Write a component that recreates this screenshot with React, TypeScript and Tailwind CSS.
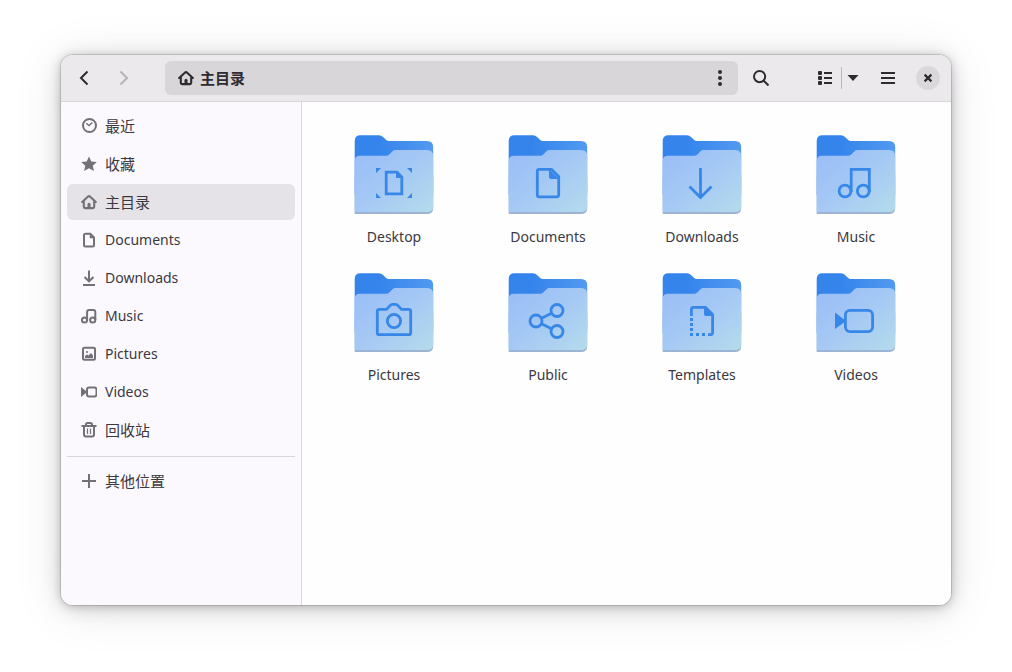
import React from 'react';
import clsx from 'clsx';

type IconName =
  | 'recent' | 'star' | 'home' | 'document' | 'download' | 'music' | 'picture' | 'video' | 'trash' | 'plus'
  | 'back' | 'forward' | 'kebab' | 'search' | 'list' | 'caret' | 'menu' | 'close';

type FolderName = 'desktop' | 'documents' | 'downloads' | 'music' | 'pictures' | 'public' | 'templates' | 'videos';

const iconShapes: Record<IconName, React.ReactNode> = {
  recent: (
    <>
      <circle cx="8.5" cy="7.5" r="6.5" />
      <path d="M5.3 5.2 8 7.6l3.4-3" strokeWidth="1.4" />
    </>
  ),
  star: (
    <path
      d="M8 0.6 10.3 5.5 15.8 6 11.7 9.7 13 15 8 12.2 3 15 4.3 9.7.2 6 5.7 5.5Z"
      fill="currentColor"
      stroke="none"
    />
  ),
  home: (
    <>
      <path
        d="M1.2 8 6.8 2.7Q8 1.600 9.200 2.700L14.800 8M2.800 7.500V12.800A1.300 1.300 0 0 0 4.100 14.100H11.900A1.300 1.300 0 0 0 13.200 12.800V7.500"
        strokeWidth="2.1"
        strokeLinecap="round"
      />
      <path d="M6.5 14V10.3a1.5 1.5 0 0 1 3 0V14Z" fill="currentColor" stroke="none" />
    </>
  ),
  document: (
    <>
      <path d="M4.800 1.800h4.500L13 5.500V13a1.500 1.500 0 0 1-1.500 1.500h-7A1.500 1.500 0 0 1 3 13V3.300A1.500 1.500 0 0 1 4.500 1.800Z" />
      <path d="M8.800 2v4.200h4.200Z" fill="currentColor" stroke="none" />
    </>
  ),
  download: <path d="M8 .5V11M3.5 7 8 11.3 12.5 7M2 15h12" />,
  music: (
    <>
      <circle cx="3.5" cy="12" r="2.6" />
      <circle cx="11.7" cy="12" r="2.6" />
      <path d="M6.1 12V4a2 2 0 0 1 2-2h4.200a2 2 0 0 1 2 2V12" />
    </>
  ),
  picture: (
    <>
      <rect x="2" y="1.800" width="12" height="12" rx="1.500" />
      <path d="M4 12V10l2-1.5 1.5 1L10 7l2 2.5V12Z" fill="currentColor" stroke="none" />
      <circle cx="6" cy="6" r="1" fill="currentColor" stroke="none" />
    </>
  ),
  video: (
    <>
      <rect x="6" y="3.500" width="9.500" height="9" rx="2.200" />
      <path d="M0 3 5 7v2L0 13Z" fill="currentColor" stroke="none" />
    </>
  ),
  trash: (
    <>
      <path d="M.5 4h15M3 4v8.5A2 2 0 0 0 5 14.5h6a2 2 0 0 0 2-2V4M5 4V2.500A1.500 1.500 0 0 1 6.500 1h3A1.500 1.500 0 0 1 11 2.500V4" />
      <path d="M6.500 6.500v5.500M9.500 6.500v5.500" strokeWidth="1.200" />
    </>
  ),
  plus: <path d="M8 1v14M1 8h14" />,
  back: <path d="M11.500 1.500 5 8 11.500 14.500" />,
  forward: <path d="M4.500 1.500 11 8 4.500 14.500" />,
  kebab: (
    <g fill="currentColor" stroke="none">
      <circle cx="8" cy="2" r="2" />
      <circle cx="8" cy="8" r="2" />
      <circle cx="8" cy="14" r="2" />
    </g>
  ),
  search: (
    <>
      <circle cx="6.600" cy="6.600" r="5.600" />
      <path d="m10.500 10.500 5 5" />
    </>
  ),
  list: (
    <g fill="currentColor" stroke="none">
      <rect x="1" y="1" width="4" height="4" rx="1" />
      <rect x="1" y="6" width="4" height="4" rx="1" />
      <rect x="1" y="11" width="4" height="4" rx="1" />
      <path d="M7 2h8v2H7zM7 7h8v2H7zM7 12h8v2H7z" />
    </g>
  ),
  caret: <path d="M2.500 5h11L8 11Z" fill="currentColor" stroke="none" />,
  menu: <path d="M1 3h14M1 8h14M1 13h14" />,
  close: <path d="m4.600 4.600 6.800 6.800M11.400 4.600l-6.800 6.800" strokeWidth="2.200" />,
};

const folderGlyphs: Record<FolderName, React.ReactNode> = {
  desktop: (
    <>
      <path d="M32.200 37.200H43L47.800 42V58.800H32.200Z" />
      <path
        d="M42 37v6h6ZM22 38V33h5ZM53 33h5v5ZM22 58v5h5ZM58 58v5h-5Z"
        fill="currentColor"
        stroke="none"
      />
    </>
  ),
  documents: (
    <>
      <path d="M31 34.300H43.500L50.700 41.500V60a1.800 1.800 0 0 1-1.800 1.800H31A1.800 1.800 0 0 1 29.300 60V36A1.800 1.800 0 0 1 31 34.300Z" />
      <path d="M41 34v8a2 2 0 0 0 2 2h8Z" fill="currentColor" stroke="none" />
    </>
  ),
  downloads: <path d="M38.500 33V62M27.500 51.500 38.500 62.500 49.500 51.500" />,
  music: (
    <>
      <circle cx="29" cy="56" r="5.900" />
      <circle cx="47.300" cy="56" r="5.900" />
      <path d="M35.200 57V34.300H53.300V57" />
    </>
  ),
  pictures: (
    <>
      <path d="M25.200 36.400H32.500L36 32.600A4 4 0 0 1 38.500 31.400H41.500A4 4 0 0 1 44 32.600L47.500 36.400H54.700A2 2 0 0 1 56.700 38.400V59.700A2 2 0 0 1 54.700 61.700H25.200A2 2 0 0 1 23.300 59.700V38.400A2 2 0 0 1 25.200 36.400Z" />
      <circle cx="40" cy="48" r="6.600" />
    </>
  ),
  public: (
    <>
      <circle cx="28" cy="48" r="6" />
      <circle cx="49" cy="37.500" r="6" />
      <circle cx="49" cy="58.500" r="6" />
      <path d="M33.500 45.200 43.500 40.200M33.500 50.800 43.500 55.800" />
    </>
  ),
  templates: (
    <>
      <path d="M29.400 43V36A1.800 1.800 0 0 1 31 34.400H43.500L50.600 41.500V60A1.800 1.800 0 0 1 49 61.600H46" />
      <path d="M42 34v7a2 2 0 0 0 2 2h7Z" fill="currentColor" stroke="none" />
      <path
        d="M28 45h3v3h-3zM28 50h3v3h-3zM28 55h3v3h-3zM28 60h3v3h-3zM34 60h3v3h-3zM40 60h3v3h-3z"
        fill="currentColor"
        stroke="none"
      />
    </>
  ),
  videos: (
    <>
      <rect x="29.400" y="37.400" width="27.200" height="21.200" rx="4.500" />
      <path d="M19 39.500 28 46.500V49.500L19 56Z" fill="currentColor" stroke="none" />
    </>
  ),
};

// Latin names sit one step smaller than the Chinese ones
const places: { icon: IconName; label: string; latin?: boolean }[] = [
  { icon: 'recent', label: '最近' },
  { icon: 'star', label: '收藏' },
  { icon: 'home', label: '主目录' },
  { icon: 'document', label: 'Documents', latin: true },
  { icon: 'download', label: 'Downloads', latin: true },
  { icon: 'music', label: 'Music', latin: true },
  { icon: 'picture', label: 'Pictures', latin: true },
  { icon: 'video', label: 'Videos', latin: true },
  { icon: 'trash', label: '回收站' },
];

const folders: { glyph: FolderName; label: string }[] = [
  { glyph: 'desktop', label: 'Desktop' },
  { glyph: 'documents', label: 'Documents' },
  { glyph: 'downloads', label: 'Downloads' },
  { glyph: 'music', label: 'Music' },
  { glyph: 'pictures', label: 'Pictures' },
  { glyph: 'public', label: 'Public' },
  { glyph: 'templates', label: 'Templates' },
  { glyph: 'videos', label: 'Videos' },
];

function Icon({ name, className }: { name: IconName; className?: string }) {
  return (
    <svg
      viewBox="0 0 16 16"
      fill="none"
      stroke="currentColor"
      strokeWidth="2"
      className={clsx('size-4 shrink-0', className)}
      aria-hidden="true"
    >
      {iconShapes[name]}
    </svg>
  );
}

function ToolButton({ icon, label, className }: { icon: IconName; label: string; className?: string }) {
  return (
    <button
      type="button"
      aria-label={label}
      className={clsx('flex h-[34px] shrink-0 items-center justify-center rounded-md', className)}
    >
      <Icon name={icon} />
    </button>
  );
}

interface PlaceItemProps {
  icon: IconName;
  label: string;
  latin?: boolean;
  active?: boolean;
}

function PlaceItem({ icon, label, latin = false, active = false }: PlaceItemProps) {
  return (
    <button
      type="button"
      aria-current={active ? 'page' : undefined}
      className={clsx(
        'flex h-9 w-full items-center gap-2 rounded-md px-3.5 text-left',
        latin ? 'text-[14px] leading-5' : 'text-[15px] leading-5',
        active && 'bg-[#e5e3e7]'
      )}
    >
      <Icon name={icon} className="text-[#737177]" />
      {label}
    </button>
  );
}

function Folder({ glyph, label }: { glyph: FolderName; label: string }) {
  return (
    <button type="button" className="flex h-[138px] flex-col items-center gap-3 text-[14px] leading-5">
      <svg viewBox="0 0 80 80" fill="none" className="size-20" aria-hidden="true">
        <path
          d="M.7 60V6Q.7.200 6.500.200H25Q27.500.200 29 2L32.500 5.200Q33.500 6 35 6H73Q79.200 6 79.200 12V60Z"
          fill="url(#folder-back)"
        />
        <path d="M.7 40V79H73Q79.200 79 79.200 73V40Z" fill="#9db3d3" />
        <path
          d="M.7 26Q.7 20.700 6 20.700H32Q34 20.700 35.500 19.200L38.500 16.200Q39.700 15 41.500 15H73Q79.200 15 79.200 21V71Q79.200 77 73 77H.7Z"
          fill="url(#folder-front)"
        />
        <g stroke="currentColor" strokeWidth="2.800" className="text-[#3687e8]">
          {folderGlyphs[glyph]}
        </g>
      </svg>
      {label}
    </button>
  );
}

export default function App() {
  return (
    <div className="flex h-screen bg-white px-[61px] pt-[55px] pb-[67px] font-['Noto_Sans','Noto_Sans_CJK_SC',sans-serif] text-[#3b393f]">
      {/* Gradients shared by every folder */}
      <svg className="absolute size-0" aria-hidden="true">
        <defs>
          <linearGradient id="folder-back" x1="0" y1="0" x2="1" y2="0">
            <stop offset="0.3" stopColor="#3484ec" />
            <stop offset="1" stopColor="#539af0" />
          </linearGradient>
          <linearGradient id="folder-front" x1="0" y1="0" x2="1" y2="1">
            <stop offset="0" stopColor="#99bcf8" />
            <stop offset="0.5" stopColor="#a5c9f4" />
            <stop offset="1" stopColor="#b5dbec" />
          </linearGradient>
        </defs>
      </svg>

      <div className="flex min-w-0 flex-1 flex-col overflow-hidden rounded-xl bg-white shadow-[0_0_0_1px_rgba(0,0,0,0.12),0_1px_8px_rgba(0,0,0,0.18),0_3px_20px_rgba(0,0,0,0.16),0_4px_50px_rgba(0,0,0,0.1)]">
        <header className="flex h-[47px] shrink-0 items-center border-b border-[#d9d7da] bg-[#ebe9ec] pr-[11px] pl-1.5 text-[#2e2c31]">
          <ToolButton icon="back" label="后退" className="w-[34px]" />
          <ToolButton icon="forward" label="前进" className="ml-1.5 w-[34px] text-[#b5b3b7]" />

          <nav className="ml-6 flex h-[34px] min-w-0 flex-1 items-center justify-between rounded-md bg-[#d8d6d9]">
            <button type="button" className="flex h-full items-center gap-1.5 px-[13px] text-[15px] leading-5 font-bold">
              <Icon name="home" />
              主目录
            </button>
            <ToolButton icon="kebab" label="更多" className="w-9" />
          </nav>

          <ToolButton icon="search" label="搜索" className="ml-1.5 w-[34px]" />
          <div className="ml-[30px] flex items-center">
            <ToolButton icon="list" label="列表视图" className="w-[33px]" />
            <div className="h-[22px] w-px bg-[#b9b7bb]" />
            <ToolButton icon="caret" label="视图选项" className="w-[21px]" />
          </div>
          <ToolButton icon="menu" label="菜单" className="ml-2 w-[34px]" />
          <button
            type="button"
            aria-label="关闭"
            className="ml-[11px] flex size-6 shrink-0 items-center justify-center rounded-full bg-[#dad8db]"
          >
            <Icon name="close" />
          </button>
        </header>

        <div className="flex min-h-0 flex-1">
          <aside className="flex w-[241px] shrink-0 flex-col border-r border-[#d9d7db] bg-[#fbf9fd] p-1.5">
            <div className="flex flex-col gap-0.5">
              {places.map((place) => (
                <PlaceItem key={place.label} {...place} active={place.icon === 'home'} />
              ))}
            </div>
            <hr className="mt-2 mb-1.5 border-[#d9d7db]" />
            <PlaceItem icon="plus" label="其他位置" />
          </aside>

          <main className="min-w-0 flex-1 overflow-auto bg-[#fefefe] pt-[33px] pr-[18px] pl-[15px]">
            <div className="grid grid-cols-4">
              {folders.map((folder) => (
                <Folder key={folder.glyph} {...folder} />
              ))}
            </div>
          </main>
        </div>
      </div>
    </div>
  );
}
